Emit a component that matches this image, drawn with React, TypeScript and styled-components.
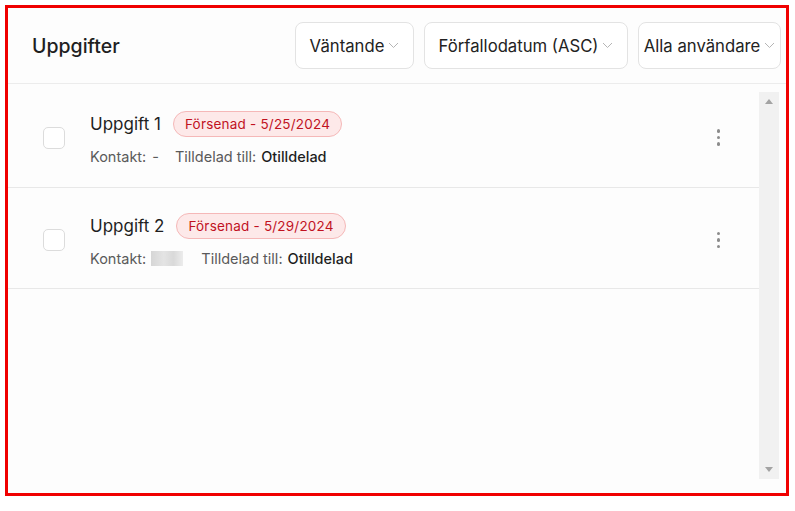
import { createGlobalStyle, styled } from "styled-components";

const GlobalStyle = createGlobalStyle`
	html, body {
		margin: 0;
		padding: 0;
		background: #ffffff;
		font-family: Inter, "Noto Sans", "Liberation Sans", sans-serif;
		color: #1d1d1f;
	}
`;

const Frame = styled.div`
	box-sizing: border-box;
	margin: 5px 0 0 5px;
	width: 784px;
	height: 491px;
	border: 3px solid #f00000;
	background: #fdfdfd;
	display: flex;
	flex-direction: column;
`;

const Header = styled.div`
	display: flex;
	align-items: center;
	justify-content: space-between;
	height: 75px;
	padding: 0 5px 0 24px;
	border-bottom: 1px solid #ececec;
	flex-shrink: 0;
`;

const Title = styled.h1`
	margin: 0;
	font-size: 19.5px;
	font-weight: 500;
	color: #1f1f1f;
`;

const Filters = styled.div`
	display: flex;
	gap: 10px;
`;

const Select = styled.div<{ $width: number }>`
	box-sizing: border-box;
	width: ${(p) => p.$width}px;
	height: 47px;
	display: flex;
	align-items: center;
	justify-content: center;
	gap: 4px;
	border: 1px solid #e3e3e3;
	border-radius: 8px;
	background: #ffffff;
	font-size: 16.7px;
	color: #222;
`;

const Chevron = () => (
	<svg width="11" height="7" viewBox="0 0 11 7" fill="none">
		<path d="M1 1l4.5 4.5L10 1" stroke="#b5b5b5" strokeWidth="1" />
	</svg>
);

const Body = styled.div`
	flex: 1;
	display: flex;
	min-height: 0;
`;

const List = styled.div`
	flex: 1;
	display: flex;
	flex-direction: column;
`;

const Row = styled.div<{ $height: number }>`
	height: ${(p) => p.$height}px;
	display: flex;
	align-items: center;
	padding: 0 39px 0 35px;
	border-bottom: 1px solid #e8e8e8;
`;

const Checkbox = styled.div`
	box-sizing: border-box;
	width: 22px;
	height: 22px;
	border: 1px solid #dcdcdc;
	border-radius: 5px;
	background: #fff;
	margin-top: 4px;
`;

const Info = styled.div`
	flex: 1;
	display: flex;
	flex-direction: column;
	gap: 11px;
	margin: 4px 0 0 25px;
`;

const TitleLine = styled.div`
	display: flex;
	align-items: center;
	gap: 12px;
`;

const TaskName = styled.span`
	font-size: 17px;
	color: #1f1f1f;
`;

const Badge = styled.span`
	box-sizing: border-box;
	height: 26px;
	display: inline-flex;
	align-items: center;
	padding: 0 11px;
	border: 1px solid #f5b8b8;
	border-radius: 13px;
	background: #fde9e9;
	color: #c1121f;
	font-size: 13.5px;
	letter-spacing: 0.2px;
`;

const Meta = styled.div`
	display: flex;
	align-items: center;
	font-size: 14.5px;
	color: #5a5a5a;
`;

const MetaItem = styled.span<{ $gap: number }>`
	display: inline-flex;
	align-items: center;
	margin-right: ${(p) => p.$gap}px;
`;

const Strong = styled.span`
	color: #1d1d1d;
	font-weight: 500;
	margin-left: 5px;
`;

const Blurred = styled.span`
	display: inline-block;
	width: 32px;
	height: 15px;
	margin-left: 5px;
	background: linear-gradient(90deg, #d6d6d6, #e4e4e4 40%, #d9d9d9 70%, #ececec);
	filter: blur(0.6px);
`;

const Kebab = styled.div`
	display: flex;
	flex-direction: column;
	gap: 3px;
	margin-top: 4px;
	span {
		width: 3.5px;
		height: 3.5px;
		border-radius: 50%;
		background: #8c8c8c;
	}
`;

const Scrollbar = styled.div`
	width: 20px;
	margin: 8px 7px 14px 0;
	background: #f1f1f1;
	display: flex;
	flex-direction: column;
	justify-content: space-between;
	align-items: center;
	padding: 7px 0;
	box-sizing: border-box;
`;

const Arrow = styled.div<{ $down?: boolean }>`
	width: 0;
	height: 0;
	border-left: 4.5px solid transparent;
	border-right: 4.5px solid transparent;
	${(p) =>
		p.$down
			? "border-top: 5px solid #a3a3a3;"
			: "border-bottom: 5px solid #a3a3a3;"}
`;

const tasks = [
	{ name: "Uppgift 1", due: "5/25/2024", contact: "-", height: 103 },
	{ name: "Uppgift 2", due: "5/29/2024", contact: null, height: 100 },
];

export default function App() {
	return (
		<>
			<GlobalStyle />
			<Frame>
				<Header>
					<Title>Uppgifter</Title>
					<Filters>
						<Select $width={119}>
							Väntande <Chevron />
						</Select>
						<Select $width={204}>
							Förfallodatum (ASC) <Chevron />
						</Select>
						<Select $width={143}>
							Alla användare <Chevron />
						</Select>
					</Filters>
				</Header>
				<Body>
					<List>
						{tasks.map((t) => (
							<Row key={t.name} $height={t.height}>
								<Checkbox />
								<Info>
									<TitleLine>
										<TaskName>{t.name}</TaskName>
										<Badge>Försenad - {t.due}</Badge>
									</TitleLine>
									<Meta>
										<MetaItem $gap={t.contact ? 16 : 18}>
											Kontakt:
											{t.contact ? (
												<span style={{ marginLeft: 6 }}>{t.contact}</span>
											) : (
												<Blurred />
											)}
										</MetaItem>
										<MetaItem $gap={0}>
											Tilldelad till:<Strong>Otilldelad</Strong>
										</MetaItem>
									</Meta>
								</Info>
								<Kebab>
									<span />
									<span />
									<span />
								</Kebab>
							</Row>
						))}
					</List>
					<Scrollbar>
						<Arrow />
						<Arrow $down />
					</Scrollbar>
				</Body>
			</Frame>
		</>
	);
}
